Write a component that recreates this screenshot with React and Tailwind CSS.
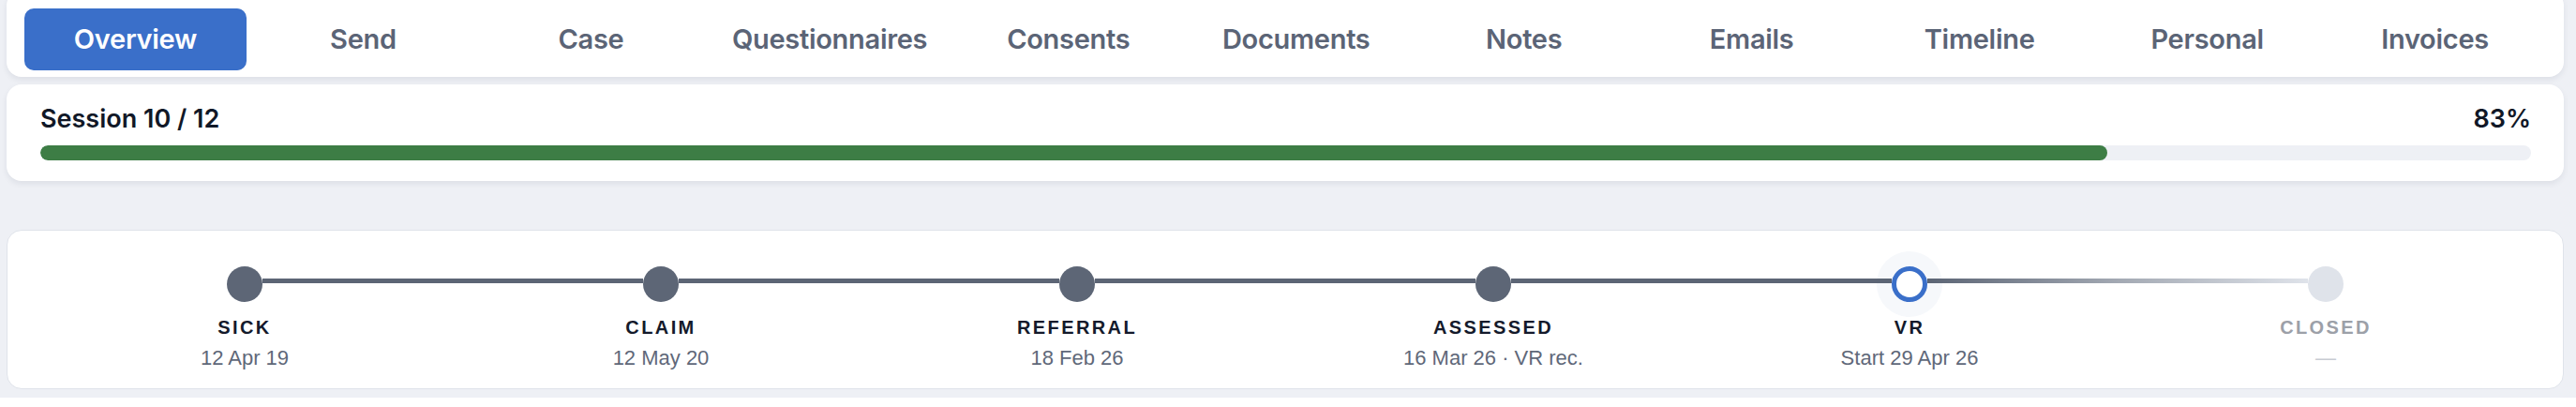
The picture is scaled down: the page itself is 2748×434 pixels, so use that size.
import React from "react";

const tabs = [
  "Overview",
  "Send",
  "Case",
  "Questionnaires",
  "Consents",
  "Documents",
  "Notes",
  "Emails",
  "Timeline",
  "Personal",
  "Invoices",
];

const stages = [
  { key: "sick", label: "SICK", date: "12 Apr 19", state: "done" },
  { key: "claim", label: "CLAIM", date: "12 May 20", state: "done" },
  { key: "referral", label: "REFERRAL", date: "18 Feb 26", state: "done" },
  { key: "assessed", label: "ASSESSED", date: "16 Mar 26 · VR rec.", state: "done" },
  { key: "vr", label: "VR", date: "Start 29 Apr 26", state: "current" },
  { key: "closed", label: "CLOSED", date: "—", state: "todo" },
];

const session = { current: 10, total: 12, percent: 83 };

// left / right half of the connector next to a stage dot
const connectorClass = (i, side) => {
  const last = stages.length - 1;
  if (side === "left") {
    if (i === 0) return "bg-transparent";
    if (stages[i].state === "todo")
      return "bg-gradient-to-r from-[#a3a9b3] to-[#dfe3ea]";
    return "bg-[#5c6575]";
  }
  if (i === last) return "bg-transparent";
  if (stages[i + 1].state === "todo")
    return "bg-gradient-to-r from-[#5c6575] to-[#a3a9b3]";
  return "bg-[#5c6575]";
};

const Dot = ({ state }) => {
  if (state === "current")
    return (
      <div className="w-[38px] h-[38px] shrink-0 rounded-full border-[5px] border-[#3a6fc9] bg-white shadow-[0_0_0_16px_#f6f8fb]" />
    );
  if (state === "todo")
    return <div className="w-[38px] h-[38px] shrink-0 rounded-full bg-[#dfe3ea]" />;
  return <div className="w-[38px] h-[38px] shrink-0 rounded-full bg-[#5d6676]" />;
};

const App = () => {
  return (
    <div className="min-h-screen bg-[#eef0f5] pl-[7px] pr-[13px] font-['Inter',sans-serif]">
      {/* Tabs */}
      <div className="-mt-[10px] bg-white rounded-[16px] shadow-[0_3px_6px_rgba(30,41,59,0.08)] pt-[19px] pb-[7px] px-[19px] flex gap-[6px]">
        {tabs.map((t, i) => (
          <div
            key={t}
            className={
              i === 0
                ? "flex-1 basis-0 px-[26px] whitespace-nowrap h-[66px] flex items-center justify-center rounded-[10px] bg-[#3a6fc9] text-white text-[29px] font-semibold tracking-[-0.01em]"
                : "flex-1 basis-0 px-[26px] whitespace-nowrap h-[66px] flex items-center justify-center rounded-[10px] text-[#5b6476] text-[29px] font-semibold tracking-[-0.01em]"
            }
          >
            {t}
          </div>
        ))}
      </div>

      {/* Session progress */}
      <div className="mt-[8px] bg-white rounded-[16px] shadow-[0_3px_6px_rgba(30,41,59,0.08)] pt-[24px] pb-[22px] pl-[36px] pr-[35px]">
        <div className="flex justify-between text-[27px] leading-[26px] font-semibold text-[#111827]">
          <span>
            Session {session.current} / {session.total}
          </span>
          <span>{session.percent}%</span>
        </div>
        <div className="mt-[15px] h-[16px] rounded-full bg-[#eef0f5] overflow-hidden">
          <div
            className="h-full rounded-full bg-[#3d7d45]"
            style={{ width: `${session.percent}%` }}
          />
        </div>
      </div>

      {/* Case stages */}
      <div className="mt-[52px] bg-white rounded-[16px] border border-[#dfe3ea] pt-[38px] pb-[21px] px-[31px] flex font-['Liberation_Sans',Arial,sans-serif]">
        {stages.map((s, i) => (
          <div key={s.key} className="flex-1 flex flex-col items-center">
            <div className="w-full flex items-start">
              <div className={`relative flex-1 h-[5px] mt-[13px] ${connectorClass(i, "left")}`} />
              <Dot state={s.state} />
              <div className={`relative flex-1 h-[5px] mt-[13px] ${connectorClass(i, "right")}`} />
            </div>
            <div
              className={
                s.state === "todo"
                  ? "mt-[17px] text-[20px] leading-[20px] font-bold tracking-[0.12em] text-[#9ca0a8]"
                  : "mt-[17px] text-[20px] leading-[20px] font-bold tracking-[0.12em] text-[#141a2b]"
              }
            >
              {s.label}
            </div>
            <div
              className={
                s.state === "todo"
                  ? "mt-[12px] text-[22px] leading-[22px] text-[#c8ccd3]"
                  : "mt-[12px] text-[22px] leading-[22px] text-[#5f6879]"
              }
            >
              {s.date}
            </div>
          </div>
        ))}
      </div>
    </div>
  );
};

export default App;
